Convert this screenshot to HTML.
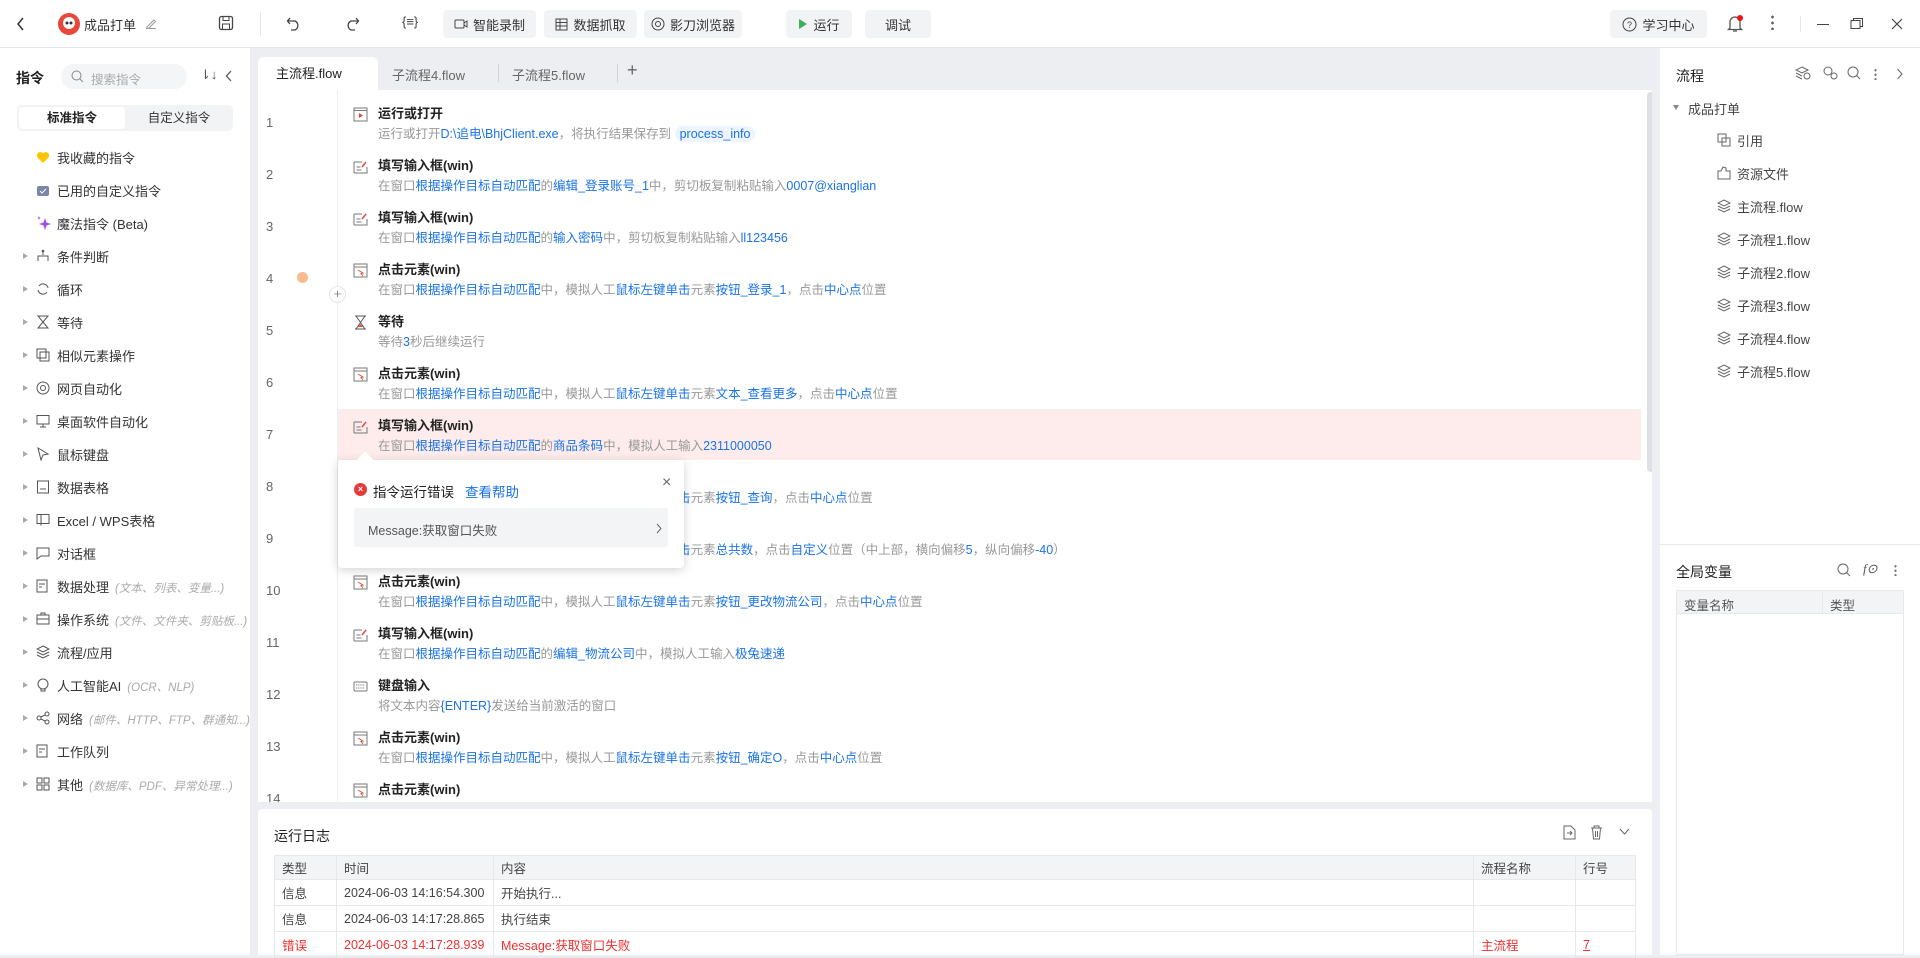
<!DOCTYPE html>
<html><head><meta charset="utf-8">
<style>
*{box-sizing:border-box;margin:0;padding:0}
body{width:1920px;height:955px;overflow:hidden;background:#eceef2;font-family:"Liberation Sans","Noto Sans CJK SC",sans-serif;color:#333;position:relative;font-size:13px}
.a{position:absolute;white-space:nowrap}
.top{position:absolute;left:0;top:0;width:1920px;height:48px;background:#fff;border-bottom:1px solid #e4e6ea}
.btn{position:absolute;top:10px;height:28px;background:#f2f3f5;border-radius:4px;font-size:13px;color:#333;display:flex;align-items:center;justify-content:center;gap:5px}
.left{position:absolute;left:0;top:48px;width:250px;height:907px;background:#fff}
.li{position:absolute;left:0;width:250px;height:22px;font-size:13px;color:#333;display:flex;align-items:center}
.li .ar{position:absolute;left:23px;width:0;height:0;border-left:5px solid #aaa;border-top:3.5px solid transparent;border-bottom:3.5px solid transparent}
.li svg{position:absolute;left:36px}
.li span{position:absolute;left:57px;white-space:nowrap}
.li i{color:#aaa;font-size:11.5px;margin-left:6px;white-space:nowrap}
.ed{position:absolute;left:258px;top:90px;width:1394px;height:712px;background:#fff;overflow:hidden}
.num{position:absolute;left:8px;width:14px;font-size:13px;color:#666}
.tt{position:absolute;left:120px;font-size:13px;font-weight:bold;color:#222;white-space:nowrap}
.ds{position:absolute;left:120px;font-size:12.5px;color:#999;white-space:nowrap}
.ds b{font-weight:normal;color:#1a73e8}
.ic{position:absolute;left:95px}
.log{position:absolute;left:258px;top:809px;width:1394px;height:146px;background:#fff;border-radius:4px 4px 0 0}
table{border-collapse:collapse;position:absolute;left:16px;top:46px;width:1362px;font-size:12.5px}
td{border:1px solid #e6e8eb;height:26px;padding:0 7px;color:#444;white-space:nowrap}
tr.h td{background:#f3f4f6;height:24px;color:#444}
tr.e td{color:#f03030}
.right{position:absolute;left:1660px;top:48px;width:260px;height:907px;background:#fff}
.ri{position:absolute;left:57px;font-size:13px;color:#444;display:flex;align-items:center;gap:6px;height:20px;white-space:nowrap}
</style></head><body>
<div class="top">
 <svg class="a" style="left:16px;top:17px" width="10" height="14"><path d="M7 1L2 7l5 6" stroke="#333" stroke-width="1.5" fill="none"/></svg>
 <svg class="a" style="left:57px;top:12px" width="24" height="24"><circle cx="12" cy="12" r="11" fill="#e8473a"/><circle cx="12" cy="11" r="6" fill="#fff"/><circle cx="10" cy="11" r="1.5" fill="#333"/><circle cx="14" cy="11" r="1.5" fill="#333"/></svg>
 <div class="a" style="left:84px;top:15px;font-size:13px">成品打单</div>
 <svg class="a" style="left:145px;top:17px" width="12" height="12"><path d="M2 10L9 3l1.5 1.5L3.5 11.5H2z M1 11.5h10" stroke="#999" fill="none"/></svg>
 <svg class="a" style="left:218px;top:15px" width="16" height="16"><rect x="1.5" y="1.5" width="13" height="13" rx="2" stroke="#444" stroke-width="1.3" fill="none"/><rect x="5" y="1.5" width="6" height="4" stroke="#444" fill="none"/><rect x="4.5" y="9" width="7" height="5.5" stroke="#444" fill="none"/></svg>
 <div class="a" style="left:260px;top:12px;width:1px;height:24px;background:#e4e6ea"></div>
 <svg class="a" style="left:286px;top:15px" width="16" height="16"><path d="M4 3L1.5 6 4 9M2 6h7a5 5 0 010 9H5" stroke="#444" stroke-width="1.3" fill="none"/></svg>
 <svg class="a" style="left:344px;top:15px" width="16" height="16"><path d="M12 3l2.5 3L12 9M14 6H7a5 5 0 000 9h4" stroke="#444" stroke-width="1.3" fill="none"/></svg>
 <div class="a" style="left:402px;top:14px;font-size:13px;color:#444">{≡}</div>
 <div class="btn" style="left:443px;width:93px"><svg width="14" height="12"><rect x="1" y="2" width="9" height="8" rx="1" stroke="#444" fill="none"/><path d="M10 5l3-2v6l-3-2" stroke="#444" fill="none"/></svg>智能录制</div>
 <div class="btn" style="left:544px;width:93px"><svg width="13" height="13"><rect x="1" y="1" width="11" height="11" stroke="#444" fill="none"/><path d="M1 4.5h11M1 8h11M5 1v11" stroke="#444"/></svg>数据抓取</div>
 <div class="btn" style="left:644px;width:98px"><svg width="14" height="14"><circle cx="7" cy="7" r="6" stroke="#444" fill="none"/><circle cx="7" cy="7" r="2.5" stroke="#444" fill="none"/></svg>影刀浏览器</div>
 <div class="btn" style="left:786px;width:66px"><svg width="10" height="12"><path d="M1 1l8 5-8 5z" fill="#3bb15b"/></svg>运行</div>
 <div class="btn" style="left:865px;width:66px">调试</div>
 <div class="btn" style="left:1610px;width:97px"><svg width="15" height="15"><circle cx="7.5" cy="7.5" r="6.5" stroke="#444" fill="none"/><text x="5" y="11" font-size="9" fill="#444">?</text></svg>学习中心</div>
 <svg class="a" style="left:1726px;top:14px" width="18" height="20"><path d="M4 14V8a5 5 0 0110 0v6l1.5 1.5h-13z M7 17h4" stroke="#555" stroke-width="1.3" fill="none"/><circle cx="14" cy="4" r="3" fill="#f01010"/></svg>
 <div class="a" style="left:1771px;top:14px;width:3px;height:16px;background:radial-gradient(circle,#666 1.3px,transparent 1.5px) 0 0/3px 6px"></div>
 <div class="a" style="left:1800px;top:16px;width:1px;height:16px;background:#e4e6ea"></div>
 <div class="a" style="left:1817px;top:24px;width:12px;height:1px;background:#444"></div>
 <svg class="a" style="left:1850px;top:17px" width="14" height="13"><rect x="1" y="3.5" width="9" height="8" stroke="#444" fill="none"/><path d="M3.5 3.5V1.5h9v8h-2.5" stroke="#444" fill="none"/></svg>
 <svg class="a" style="left:1891px;top:18px" width="12" height="12"><path d="M1 1l10 10M11 1L1 11" stroke="#444" stroke-width="1.2"/></svg>
</div>

<div class="left">
 <div class="a" style="left:16px;top:20px;font-size:14px;font-weight:bold;color:#222">指令</div>
 <div class="a" style="left:61px;top:16px;width:126px;height:25px;border-radius:13px;background:#f4f5f7"></div>
 <svg class="a" style="left:71px;top:22px" width="13" height="13"><circle cx="5.5" cy="5.5" r="4.5" stroke="#888" fill="none"/><path d="M9 9l3 3" stroke="#888"/></svg>
 <div class="a" style="left:91px;top:21px;font-size:12.5px;color:#aaa">搜索指令</div>
 <div class="a" style="left:200px;top:19px;font-size:13px;color:#555">⇂↓</div>
 <svg class="a" style="left:225px;top:22px" width="8" height="12"><path d="M6 1L1.5 6 6 11" stroke="#555" stroke-width="1.3" fill="none"/></svg>
 <div class="a" style="left:17px;top:57px;width:216px;height:26px;background:#f2f3f5;border-radius:5px"></div>
 <div class="a" style="left:19px;top:59px;width:106px;height:22px;background:#fff;border-radius:4px;text-align:center;line-height:22px;font-size:12.5px;font-weight:bold;color:#222">标准指令</div>
 <div class="a" style="left:127px;top:59px;width:104px;height:22px;text-align:center;line-height:22px;font-size:12.5px;color:#333">自定义指令</div>

 <div class="li" style="top:98px"><svg width="14" height="13"><path d="M7 12L1.5 6.5A3 3 0 017 2.5a3 3 0 015.5 4z" fill="#ffc400"/></svg><span>我收藏的指令</span></div>
 <div class="li" style="top:131px"><svg width="14" height="13"><rect x="1" y="2" width="12" height="10" rx="2" fill="#7b86a8"/><path d="M4 7l2 2 4-4" stroke="#fff" fill="none"/></svg><span>已用的自定义指令</span></div>
 <div class="li" style="top:164px"><svg width="16" height="14"><path d="M9 2l1.5 4.5L15 8l-4.5 1.5L9 14 7.5 9.5 3 8l4.5-1.5z" fill="#a44dea"/><path d="M3 0l.6 1.6L5 2l-1.4.4L3 4l-.6-1.6L1 2l1.4-.4z" fill="#a44dea"/></svg><span>魔法指令 (Beta)</span></div>
 <div class="li" style="top:197px"><b class="ar"></b><svg width="14" height="14"><path d="M7 1v5M2 12V7h10v5" stroke="#555" fill="none"/><circle cx="7" cy="2" r="1.3" fill="#555"/></svg><span>条件判断</span></div>
 <div class="li" style="top:230px"><b class="ar"></b><svg width="14" height="14"><path d="M12 6a5 5 0 00-9-2M2 8a5 5 0 009 2" stroke="#555" fill="none"/></svg><span>循环</span></div>
 <div class="li" style="top:263px"><b class="ar"></b><svg width="14" height="14"><path d="M2 1h10L2 13h10z" stroke="#555" fill="none"/></svg><span>等待</span></div>
 <div class="li" style="top:296px"><b class="ar"></b><svg width="14" height="14"><rect x="1" y="1" width="9" height="9" stroke="#555" fill="none"/><rect x="4" y="4" width="9" height="9" stroke="#555" fill="none"/></svg><span>相似元素操作</span></div>
 <div class="li" style="top:329px"><b class="ar"></b><svg width="14" height="14"><circle cx="7" cy="7" r="6" stroke="#555" fill="none"/><circle cx="7" cy="7" r="2.5" stroke="#555" fill="none"/></svg><span>网页自动化</span></div>
 <div class="li" style="top:362px"><b class="ar"></b><svg width="14" height="14"><rect x="1" y="1.5" width="12" height="8.5" stroke="#555" fill="none"/><path d="M7 10v3M4 13h6" stroke="#555"/></svg><span>桌面软件自动化</span></div>
 <div class="li" style="top:395px"><b class="ar"></b><svg width="14" height="14"><path d="M2 1l10 6-5 1-2 5z" stroke="#555" fill="none"/></svg><span>鼠标键盘</span></div>
 <div class="li" style="top:428px"><b class="ar"></b><svg width="14" height="14"><rect x="1.5" y="1" width="11" height="12" stroke="#555" fill="none"/><path d="M4 9h6" stroke="#555"/></svg><span>数据表格</span></div>
 <div class="li" style="top:461px"><b class="ar"></b><svg width="14" height="14"><rect x="1" y="1.5" width="12" height="9" stroke="#555" fill="none"/><path d="M5 1.5v11" stroke="#555"/></svg><span>Excel / WPS表格</span></div>
 <div class="li" style="top:494px"><b class="ar"></b><svg width="14" height="14"><path d="M1 2h12v8H5l-4 3z" stroke="#555" fill="none"/></svg><span>对话框</span></div>
 <div class="li" style="top:527px"><b class="ar"></b><svg width="14" height="14"><rect x="1" y="1" width="10" height="12" stroke="#555" fill="none"/><path d="M3 5h6M3 8h3" stroke="#555"/></svg><span>数据处理<i>(文本、列表、变量...)</i></span></div>
 <div class="li" style="top:560px"><b class="ar"></b><svg width="14" height="14"><rect x="1" y="3" width="12" height="9" stroke="#555" fill="none"/><path d="M5 3V1h4v2M1 7h12" stroke="#555" fill="none"/></svg><span>操作系统<i>(文件、文件夹、剪贴板...)</i></span></div>
 <div class="li" style="top:593px"><b class="ar"></b><svg width="14" height="14"><path d="M7 1l6 3-6 3-6-3z M1 7l6 3 6-3M1 10l6 3 6-3" stroke="#555" fill="none"/></svg><span>流程/应用</span></div>
 <div class="li" style="top:626px"><b class="ar"></b><svg width="14" height="14"><circle cx="7" cy="6" r="5" stroke="#555" fill="none"/><path d="M5 11v2h4v-2" stroke="#555" fill="none"/></svg><span>人工智能AI<i>(OCR、NLP)</i></span></div>
 <div class="li" style="top:659px"><b class="ar"></b><svg width="14" height="14"><circle cx="3" cy="7" r="2" stroke="#555" fill="none"/><circle cx="11" cy="3" r="2" stroke="#555" fill="none"/><circle cx="11" cy="11" r="2" stroke="#555" fill="none"/><path d="M5 6l4-2M5 8l4 2" stroke="#555"/></svg><span>网络<i>(邮件、HTTP、FTP、群通知...)</i></span></div>
 <div class="li" style="top:692px"><b class="ar"></b><svg width="14" height="14"><rect x="1" y="1" width="10" height="12" stroke="#555" fill="none"/><path d="M3 5h6M3 8h3" stroke="#555"/></svg><span>工作队列</span></div>
 <div class="li" style="top:725px"><b class="ar"></b><svg width="14" height="14"><rect x="1" y="1" width="5" height="5" stroke="#555" fill="none"/><rect x="8" y="1" width="5" height="5" stroke="#555" fill="none"/><rect x="1" y="8" width="5" height="5" stroke="#555" fill="none"/><rect x="8" y="8" width="5" height="5" stroke="#555" fill="none"/></svg><span>其他<i>(数据库、PDF、异常处理...)</i></span></div>
</div>

<!-- tabs -->
<div class="a" style="left:258px;top:57px;width:120px;height:33px;background:#fff;border-radius:6px 6px 0 0;font-size:13px;line-height:33px;padding-left:18px;color:#222">主流程.flow</div>
<div class="a" style="left:392px;top:65px;font-size:13px;color:#666">子流程4.flow</div>
<div class="a" style="left:498px;top:64px;width:1px;height:18px;background:#d0d2d6"></div>
<div class="a" style="left:512px;top:65px;font-size:13px;color:#666">子流程5.flow</div>
<div class="a" style="left:617px;top:64px;width:1px;height:18px;background:#d0d2d6"></div>
<div class="a" style="left:627px;top:60px;font-size:18px;color:#666">+</div>

<div class="ed">
 <div class="a" style="left:79px;top:0;width:1px;height:712px;background:#eceef1"></div>
 <div class="a" style="left:80px;top:319px;width:1303px;height:51px;background:#fdeceb"></div>
 <div class="a" style="left:1389px;top:2px;width:8px;height:380px;background:#dfe0e3;border-radius:4px"></div>
 <div class="a" style="left:39px;top:182px;width:11px;height:11px;border-radius:50%;background:#f7bb8c"></div>
 <div class="a" style="left:71px;top:196px;width:17px;height:17px;border-radius:50%;border:1px solid #e4e6ea;background:#fff;text-align:center;line-height:14px;font-size:13px;color:#888">+</div>

 <div class="num" style="top:25px">1</div><svg class="ic" style="top:17px" width="15" height="15"><rect x="1" y="1" width="13" height="13" stroke="#777" fill="none"/><path d="M1 3.5h13" stroke="#777"/><path d="M6 6l4 2.5-4 2.5z" fill="#e64a3b"/></svg>
 <div class="tt" style="top:13px">运行或打开</div>
 <div class="ds" style="top:33px">运行或打开<b>D:\追电\BhjClient.exe</b>，将执行结果保存到 <b style="background:#edf4fe;border-radius:9px;padding:1px 5px">process_info</b></div>

 <div class="num" style="top:77px">2</div><svg class="ic" style="top:69px" width="15" height="15"><path d="M1 3h8M1 14h13V8M1 3v11M3.5 8h4M3.5 11h5" stroke="#777" fill="none"/><path d="M9 8l4-5" stroke="#e64a3b" stroke-width="1.5"/></svg>
 <div class="tt" style="top:65px">填写输入框(win)</div>
 <div class="ds" style="top:85px">在窗口<b>根据操作目标自动匹配</b>的<b>编辑_登录账号_1</b>中，剪切板复制粘贴输入<b>0007@xianglian</b></div>

 <div class="num" style="top:129px">3</div><svg class="ic" style="top:121px" width="15" height="15"><path d="M1 3h8M1 14h13V8M1 3v11M3.5 8h4M3.5 11h5" stroke="#777" fill="none"/><path d="M9 8l4-5" stroke="#e64a3b" stroke-width="1.5"/></svg>
 <div class="tt" style="top:117px">填写输入框(win)</div>
 <div class="ds" style="top:137px">在窗口<b>根据操作目标自动匹配</b>的<b>输入密码</b>中，剪切板复制粘贴输入<b>ll123456</b></div>

 <div class="num" style="top:181px">4</div><svg class="ic" style="top:173px" width="15" height="15"><rect x="1" y="1" width="13" height="13" stroke="#777" fill="none"/><path d="M1 4h13" stroke="#777"/><path d="M5 7l5 3-2 .5 2 2.5" stroke="#e64a3b" fill="none"/></svg>
 <div class="tt" style="top:169px">点击元素(win)</div>
 <div class="ds" style="top:189px">在窗口<b>根据操作目标自动匹配</b>中，模拟人工<b>鼠标左键单击</b>元素<b>按钮_登录_1</b>，点击<b>中心点</b>位置</div>

 <div class="num" style="top:233px">5</div><svg class="ic" style="top:225px" width="15" height="15"><path d="M2 1h11M2 14h11M3 1l9 13M12 1L3 14" stroke="#555" fill="none"/><path d="M5 12h5l-2.5-3z" fill="#e64a3b"/></svg>
 <div class="tt" style="top:221px">等待</div>
 <div class="ds" style="top:241px">等待<b>3</b>秒后继续运行</div>

 <div class="num" style="top:285px">6</div><svg class="ic" style="top:277px" width="15" height="15"><rect x="1" y="1" width="13" height="13" stroke="#777" fill="none"/><path d="M1 4h13" stroke="#777"/><path d="M5 7l5 3-2 .5 2 2.5" stroke="#e64a3b" fill="none"/></svg>
 <div class="tt" style="top:273px">点击元素(win)</div>
 <div class="ds" style="top:293px">在窗口<b>根据操作目标自动匹配</b>中，模拟人工<b>鼠标左键单击</b>元素<b>文本_查看更多</b>，点击<b>中心点</b>位置</div>

 <div class="num" style="top:337px">7</div><svg class="ic" style="top:329px" width="15" height="15"><path d="M1 3h8M1 14h13V8M1 3v11M3.5 8h4M3.5 11h5" stroke="#777" fill="none"/><path d="M9 8l4-5" stroke="#e64a3b" stroke-width="1.5"/></svg>
 <div class="tt" style="top:325px">填写输入框(win)</div>
 <div class="ds" style="top:345px">在窗口<b>根据操作目标自动匹配</b>的<b>商品条码</b>中，模拟人工输入<b>2311000050</b></div>

 <div class="num" style="top:389px">8</div><svg class="ic" style="top:381px" width="15" height="15"><rect x="1" y="1" width="13" height="13" stroke="#777" fill="none"/></svg>
 <div class="tt" style="top:377px">点击元素(win)</div>
 <div class="ds" style="top:397px">在窗口<b>根据操作目标自动匹配</b>中，模拟人工<b>鼠标左键单击</b>元素<b>按钮_查询</b>，点击<b>中心点</b>位置</div>

 <div class="num" style="top:441px">9</div>
 <div class="tt" style="top:429px">点击元素(win)</div>
 <div class="ds" style="top:449px">在窗口<b>根据操作目标自动匹配</b>中，模拟人工<b>鼠标左键单击</b>元素<b>总共数</b>，点击<b>自定义</b>位置（中上部，横向偏移<b>5</b>，纵向偏移<b>-40</b>）</div>

 <div class="num" style="top:493px">10</div><svg class="ic" style="top:485px" width="15" height="15"><rect x="1" y="1" width="13" height="13" stroke="#777" fill="none"/><path d="M1 4h13" stroke="#777"/><path d="M5 7l5 3-2 .5 2 2.5" stroke="#e64a3b" fill="none"/></svg>
 <div class="tt" style="top:481px">点击元素(win)</div>
 <div class="ds" style="top:501px">在窗口<b>根据操作目标自动匹配</b>中，模拟人工<b>鼠标左键单击</b>元素<b>按钮_更改物流公司</b>，点击<b>中心点</b>位置</div>

 <div class="num" style="top:545px">11</div><svg class="ic" style="top:537px" width="15" height="15"><path d="M1 3h8M1 14h13V8M1 3v11M3.5 8h4M3.5 11h5" stroke="#777" fill="none"/><path d="M9 8l4-5" stroke="#e64a3b" stroke-width="1.5"/></svg>
 <div class="tt" style="top:533px">填写输入框(win)</div>
 <div class="ds" style="top:553px">在窗口<b>根据操作目标自动匹配</b>的<b>编辑_物流公司</b>中，模拟人工输入<b>极兔速递</b></div>

 <div class="num" style="top:597px">12</div><svg class="ic" style="top:589px" width="15" height="15"><rect x="1" y="3" width="13" height="9" rx="1" stroke="#777" fill="none"/><path d="M3 6h9M3 9h9" stroke="#777" stroke-dasharray="1.2 1"/></svg>
 <div class="tt" style="top:585px">键盘输入</div>
 <div class="ds" style="top:605px">将文本内容<b>{ENTER}</b>发送给当前激活的窗口</div>

 <div class="num" style="top:649px">13</div><svg class="ic" style="top:641px" width="15" height="15"><rect x="1" y="1" width="13" height="13" stroke="#777" fill="none"/><path d="M1 4h13" stroke="#777"/><path d="M5 7l5 3-2 .5 2 2.5" stroke="#e64a3b" fill="none"/></svg>
 <div class="tt" style="top:637px">点击元素(win)</div>
 <div class="ds" style="top:657px">在窗口<b>根据操作目标自动匹配</b>中，模拟人工<b>鼠标左键单击</b>元素<b>按钮_确定O</b>，点击<b>中心点</b>位置</div>

 <div class="num" style="top:701px">14</div><svg class="ic" style="top:693px" width="15" height="15"><rect x="1" y="1" width="13" height="13" stroke="#777" fill="none"/><path d="M1 4h13" stroke="#777"/><path d="M5 7l5 3-2 .5 2 2.5" stroke="#e64a3b" fill="none"/></svg>
 <div class="tt" style="top:689px">点击元素(win)</div>
 <div class="ds" style="top:709px">在窗口<b>根据操作目标自动匹配</b>中，模拟人工<b>鼠标左键单击</b>元素<b>按钮_确定</b>，点击<b>中心点</b>位置</div>

 <!-- popup -->
 <div class="a" style="left:80px;top:370px;width:346px;height:108px;background:#fff;border-radius:4px;box-shadow:0 2px 10px rgba(0,0,0,.18)">
  <div class="a" style="left:21px;top:-6px;width:12px;height:12px;background:#fff;transform:rotate(45deg)"></div>
  <div class="a" style="left:16px;top:23px;width:13px;height:13px;border-radius:50%;background:#e8393a;color:#fff;font-size:9px;text-align:center;line-height:13px;font-weight:bold">×</div>
  <div class="a" style="left:35px;top:21px;font-size:13.5px;color:#222">指令运行错误</div>
  <div class="a" style="left:127px;top:21px;font-size:13.5px;color:#1a73e8">查看帮助</div>
  <div class="a" style="left:324px;top:14px;font-size:16px;color:#666">×</div>
  <div class="a" style="left:16px;top:48px;width:314px;height:39px;background:#f3f4f6;border-radius:3px"></div>
  <div class="a" style="left:30px;top:60px;font-size:12.5px;color:#555">Message:获取窗口失败</div>
  <svg class="a" style="left:318px;top:63px" width="7" height="11"><path d="M1 1l4 4.5L1 10" stroke="#666" fill="none"/></svg>
 </div>
</div>

<div class="log">
 <div class="a" style="left:16px;top:17px;font-size:14px;color:#222">运行日志</div>
 <svg class="a" style="left:1305px;top:16px" width="13" height="15"><path d="M1 1h7l4 4v9H1z" stroke="#666" fill="none"/><path d="M4 8h5M7 6l2 2-2 2" stroke="#666" fill="none"/></svg>
 <svg class="a" style="left:1332px;top:16px" width="13" height="15"><path d="M1 3h11M4 3V1h5v2M2.5 3l1 11h6l1-11M5.5 6v6M7.5 6v6" stroke="#666" fill="none"/></svg>
 <svg class="a" style="left:1361px;top:19px" width="11" height="8"><path d="M1 1l4.5 5L10 1" stroke="#666" fill="none"/></svg>
 <table>
  <tr class="h"><td style="width:62px">类型</td><td style="width:157px">时间</td><td>内容</td><td style="width:102px">流程名称</td><td style="width:60px">行号</td></tr>
  <tr><td>信息</td><td>2024-06-03 14:16:54.300</td><td>开始执行...</td><td></td><td></td></tr>
  <tr><td>信息</td><td>2024-06-03 14:17:28.865</td><td>执行结束</td><td></td><td></td></tr>
  <tr class="e"><td>错误</td><td>2024-06-03 14:17:28.939</td><td>Message:获取窗口失败</td><td>主流程</td><td><u>7</u></td></tr>
 </table>
</div>

<div class="right">
 <div class="a" style="left:16px;top:18px;font-size:14px;color:#222">流程</div>
 <svg class="a" style="left:135px;top:18px" width="16" height="14"><path d="M7 1l6 3-6 3-6-3z M1 7l6 3M1 10l6 3" stroke="#666" fill="none"/><circle cx="12" cy="10" r="3" stroke="#666" fill="#fff"/></svg>
 <svg class="a" style="left:162px;top:18px" width="16" height="14"><circle cx="6" cy="5" r="4" stroke="#666" fill="none"/><circle cx="12" cy="10" r="3" stroke="#666" fill="#fff"/></svg>
 <svg class="a" style="left:187px;top:18px" width="14" height="14"><circle cx="6" cy="6" r="5" stroke="#666" fill="none"/><path d="M9.5 9.5l3.5 3.5" stroke="#666"/></svg>
 <div class="a" style="left:214px;top:20px;width:3px;height:12px;background:radial-gradient(circle,#777 1.1px,transparent 1.3px) 0 0/3px 4.5px"></div>
 <svg class="a" style="left:236px;top:20px" width="8" height="12"><path d="M1.5 1L6 6l-4.5 5" stroke="#666" fill="none"/></svg>
 <div class="a" style="left:13px;top:57px;width:0;height:0;border-top:5px solid #888;border-left:3.5px solid transparent;border-right:3.5px solid transparent"></div>
 <div class="a" style="left:28px;top:51px;font-size:13px;color:#444">成品打单</div>
 <div class="ri" style="top:82px"><svg width="14" height="14"><rect x="1" y="1" width="8" height="8" stroke="#666" fill="none"/><rect x="5" y="5" width="8" height="8" stroke="#666" fill="none"/></svg>引用</div>
 <div class="ri" style="top:115px"><svg width="14" height="14"><path d="M1 5h3l2-4 3 1v3h4v8H1z" stroke="#666" fill="none"/></svg>资源文件</div>
 <div class="ri" style="top:148px"><svg width="14" height="14"><path d="M7 1l6 3-6 3-6-3z M1 7l6 3 6-3M1 10l6 3 6-3" stroke="#666" fill="none"/></svg>主流程.flow</div>
 <div class="ri" style="top:181px"><svg width="14" height="14"><path d="M7 1l6 3-6 3-6-3z M1 7l6 3 6-3M1 10l6 3 6-3" stroke="#666" fill="none"/></svg>子流程1.flow</div>
 <div class="ri" style="top:214px"><svg width="14" height="14"><path d="M7 1l6 3-6 3-6-3z M1 7l6 3 6-3M1 10l6 3 6-3" stroke="#666" fill="none"/></svg>子流程2.flow</div>
 <div class="ri" style="top:247px"><svg width="14" height="14"><path d="M7 1l6 3-6 3-6-3z M1 7l6 3 6-3M1 10l6 3 6-3" stroke="#666" fill="none"/></svg>子流程3.flow</div>
 <div class="ri" style="top:280px"><svg width="14" height="14"><path d="M7 1l6 3-6 3-6-3z M1 7l6 3 6-3M1 10l6 3 6-3" stroke="#666" fill="none"/></svg>子流程4.flow</div>
 <div class="ri" style="top:313px"><svg width="14" height="14"><path d="M7 1l6 3-6 3-6-3z M1 7l6 3 6-3M1 10l6 3 6-3" stroke="#666" fill="none"/></svg>子流程5.flow</div>
 <div class="a" style="left:0;top:496px;width:260px;height:1px;background:#e8e9ec"></div>
 <div class="a" style="left:16px;top:514px;font-size:14px;color:#222">全局变量</div>
 <svg class="a" style="left:177px;top:515px" width="14" height="14"><circle cx="6" cy="6" r="5" stroke="#666" fill="none"/><path d="M9.5 9.5l3.5 3.5" stroke="#666"/></svg>
 <div class="a" style="left:203px;top:513px;font-size:13px;font-style:italic;color:#555;font-family:'Liberation Serif',serif">f⊙</div>
 <div class="a" style="left:234px;top:516px;width:3px;height:12px;background:radial-gradient(circle,#777 1.1px,transparent 1.3px) 0 0/3px 4.5px"></div>
 <div class="a" style="left:16px;top:542px;width:228px;height:365px;border:1px solid #e6e8eb"></div>
 <div class="a" style="left:17px;top:543px;width:226px;height:23px;background:#f3f4f6;border-bottom:1px solid #e6e8eb"></div>
 <div class="a" style="left:162px;top:543px;width:1px;height:23px;background:#e6e8eb"></div>
 <div class="a" style="left:24px;top:547px;font-size:12.5px;color:#555">变量名称</div>
 <div class="a" style="left:170px;top:547px;font-size:12.5px;color:#555">类型</div>
</div>
</body></html>
